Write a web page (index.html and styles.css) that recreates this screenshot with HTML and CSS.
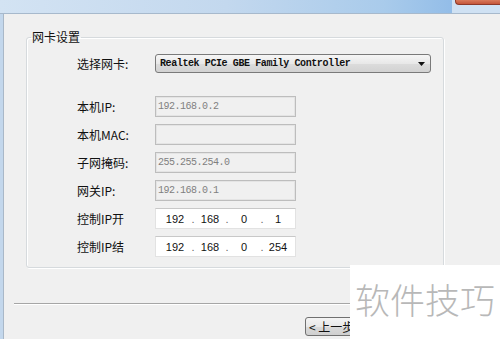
FILE: index.html
```html
<!DOCTYPE html>
<html>
<head>
<meta charset="utf-8">
<link rel="stylesheet" href="styles.css">
</head>
<body>
<div class="titlebar">
  <div class="title-main"></div>
  <div class="title-side"><span class="close-btn"></span></div>
</div>
<div class="frame">
  <div class="frame-edge"></div>
  <div class="window">
    <fieldset class="group">
      <legend class="group-title">网卡设置</legend>
      <div class="form">
        <div class="row row-select">
          <span class="label">选择网卡:</span>
          <div class="select">
            <span class="select-text">Realtek PCIe GBE Family Controller</span>
            <svg class="select-arrow" width="7" height="4" viewBox="0 0 7 4"><path d="M0 0H7L3.5 4Z" fill="#111"/></svg>
          </div>
        </div>
        <div class="row">
          <span class="label">本机IP:</span>
          <div class="box disabled">192.168.0.2</div>
        </div>
        <div class="row">
          <span class="label">本机MAC:</span>
          <div class="box disabled"></div>
        </div>
        <div class="row">
          <span class="label">子网掩码:</span>
          <div class="box disabled">255.255.254.0</div>
        </div>
        <div class="row">
          <span class="label">网关IP:</span>
          <div class="box disabled">192.168.0.1</div>
        </div>
        <div class="row">
          <span class="label">控制IP开</span>
          <div class="box ip">
            <span class="seg s1">192</span><span class="dot">.</span>
            <span class="seg s2">168</span><span class="dot">.</span>
            <span class="seg s3">0</span><span class="dot d3">.</span>
            <span class="seg s4">1</span>
          </div>
        </div>
        <div class="row">
          <span class="label">控制IP结</span>
          <div class="box ip">
            <span class="seg s1">192</span><span class="dot">.</span>
            <span class="seg s2">168</span><span class="dot">.</span>
            <span class="seg s3">0</span><span class="dot d3">.</span>
            <span class="seg s4">254</span>
          </div>
        </div>
      </div>
    </fieldset>
    <div class="separator"></div>
    <div class="buttons">
      <button class="btn">&lt; 上一步</button>
    </div>
  </div>
</div>
<div class="watermark">软件技巧</div>
</body>
</html>
```
FILE: styles.css
```css
html, body {
  margin: 0;
  padding: 0;
}
body {
  width: 500px;
  height: 339px;
  overflow: hidden;
  position: relative;
  background: #f0f0f0;
  font-family: "Noto Sans CJK SC", "Liberation Sans", sans-serif;
  font-size: 12px;
  color: #111;
}
.titlebar {
  display: flex;
  height: 13px;
  border-bottom: 1px solid #a7b9cc;
}
.title-main {
  flex: 1;
  background: linear-gradient(to right, #d3e3f3 0%, #c3d8ee 50%, #a9cbeb 85%, #93bde8 100%);
}
.title-side {
  width: 48px;
  background: #cfe1f3;
  display: flex;
  justify-content: flex-end;
}
.close-btn {
  width: 44px;
  height: 4px;
  background: linear-gradient(#d97a5c, #c4553a);
  border: 1px solid #8e3a2a;
  border-top: none;
  border-right: none;
  border-radius: 0 0 0 4px;
}
.frame {
  display: flex;
  height: 325px;
}
.frame-edge {
  width: 3px;
  background: #c3d7ec;
  border-right: 1px solid #a9b8c8;
}
.window {
  flex: 1;
  display: flex;
  flex-direction: column;
}
.group {
  margin: 17px 0 0 22px;
  width: 418px;
  box-sizing: border-box;
  padding: 0;
  border: 1px solid #d6dadd;
  border-radius: 3px;
  box-shadow: inset 1px 1px 0 #fff, 1px 1px 0 #fff;
  min-width: 0;
}
.group-title {
  font-size: 12px;
  line-height: 12px;
  margin-left: 4px;
  padding: 0 1px;
  color: #111;
}
.form {
  padding: 11px 0 10px 50px;
  display: flex;
  flex-direction: column;
  gap: 7px;
}
.row {
  display: flex;
  align-items: center;
  height: 21px;
}
.row-select {
  height: 19px;
  margin-bottom: 16px;
}
.label {
  width: 78px;
  line-height: 14px;
  color: #111;
}
.select {
  width: 276px;
  height: 19px;
  box-sizing: border-box;
  border: 1px solid #7a7a7a;
  border-radius: 3px;
  background: linear-gradient(#f6f6f6, #e8e8e8 50%, #dcdcdc 51%, #d2d2d2);
  display: flex;
  align-items: center;
  padding-left: 4px;
}
.select-text {
  flex: 1;
  font-family: "Liberation Mono", monospace;
  font-weight: bold;
  font-size: 10px;
  letter-spacing: -0.4px;
  color: #111;
}
.select-arrow {
  margin-right: 5px;
}
.box {
  width: 141px;
  height: 21px;
  box-sizing: border-box;
}
.disabled {
  border: 1px solid #bdbdbd;
  box-shadow: inset 0 0 0 1px #e4e4e4;
  background: #f0f0f0;
  color: #808080;
  font-family: "Liberation Mono", monospace;
  font-size: 10px;
  letter-spacing: -0.5px;
  line-height: 19px;
  padding-left: 2px;
}
.ip {
  background: #fff;
  border: 1px solid #e2e2e2;
  border-top-color: #c8c8c8;
  display: flex;
  align-items: center;
  padding-left: 5px;
  font-family: "Liberation Sans", sans-serif;
  font-size: 11px;
  color: #111;
}
.seg {
  text-align: center;
}
.s1 { width: 28px; }
.s2 { width: 26px; }
.s3 { width: 26px; }
.s4 { width: 22px; }
.dot {
  width: 8px;
  text-align: center;
  color: #666;
}
.d3 { width: 10px; }
.separator {
  margin: 35px 0 0 10px;
  height: 1px;
  background: #a6a6a6;
  border-bottom: 1px solid #fff;
}
.buttons {
  display: flex;
  padding: 12px 0 0 301px;
}
.btn {
  width: 76px;
  height: 19px;
  box-sizing: border-box;
  border: 1px solid #707070;
  border-radius: 3px;
  background: linear-gradient(#f4f4f4, #e8e8e8 50%, #dadada 51%, #cfcfcf);
  font-family: "Noto Sans CJK SC", sans-serif;
  font-size: 12px;
  line-height: 15px;
  padding: 0 0 0 3px;
  text-align: left;
  color: #111;
}
.watermark {
  position: absolute;
  right: 0;
  bottom: 0;
  width: 150px;
  height: 74px;
  background: #fff;
  box-sizing: border-box;
  padding: 14px 0 0 5px;
  font-family: "Noto Sans CJK SC", sans-serif;
  font-weight: 300;
  font-size: 35px;
  line-height: 40px;
  color: #b8b8b8;
  white-space: nowrap;
}
```
